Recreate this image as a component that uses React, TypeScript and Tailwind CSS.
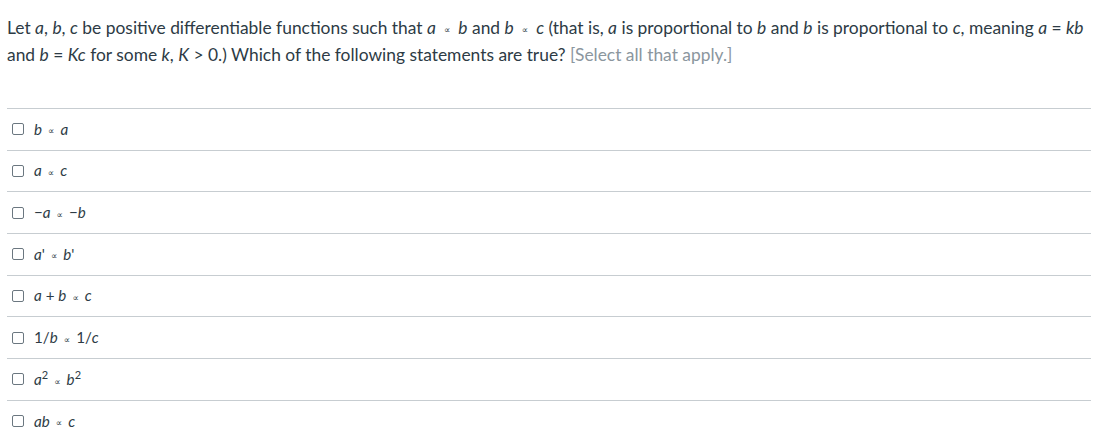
import React from 'react';

const P = ({ w = 'mx-[6px]' }: { w?: string }) => (
  <span className={`${w} inline-block align-middle text-[9px] leading-none`}>∝</span>
);

const answers: React.ReactNode[] = [
  <><i>b</i><P /><i>a</i></>,
  <><i>a</i><P /><i>c</i></>,
  <>−<i>a</i><P />−<i>b</i></>,
  <><i>a</i>'<P /><i>b</i>'</>,
  <><i>a</i> + <i>b</i><P /><i>c</i></>,
  <>1/<i>b</i><P />1/<i>c</i></>,
  <><i>a</i><sup className="text-[11px]">2</sup><P /><i>b</i><sup className="text-[11px]">2</sup></>,
  <><i>ab</i><P /><i>c</i></>,
];

export default function App() {
  return (
    <div className="h-[445px] w-[1094px] overflow-hidden bg-white pl-[7px] pr-[3px] pt-[14px] text-[#2d3b45] font-['Lato','DejaVu_Sans',sans-serif]">
      <p className="text-[17.4px] leading-[27px]">
        Let <i>a</i>, <i>b</i>, <i>c</i> be positive differentiable functions such that <i>a</i>
        <P w="mx-[8px]" /><i>b</i> and <i>b</i>
        <P w="mx-[8px]" /><i>c</i> (that is, <i>a</i> is proportional to <i>b</i> and <i>b</i> is proportional to <i>c</i>, meaning{' '}
        <i>a</i> = <i>kb</i> and <i>b</i> = <i>Kc</i> for some <i>k</i>, <i>K</i> &gt; 0.) Which of the following statements
        are true? <span className="text-[#8b969e]">[Select all that apply.]</span>
      </p>
      <div className="mt-[40px]">
        {answers.map((a, i) => (
          <div key={i} className="flex h-[41.7px] items-center gap-[10px] border-t border-[#c7cdd1] pl-[5px]">
            <span className="h-[12px] w-[12px] shrink-0 rounded-[2px] border border-[#6b7780]" />
            <span className="text-[15.2px] leading-none">{a}</span>
          </div>
        ))}
      </div>
    </div>
  );
}
